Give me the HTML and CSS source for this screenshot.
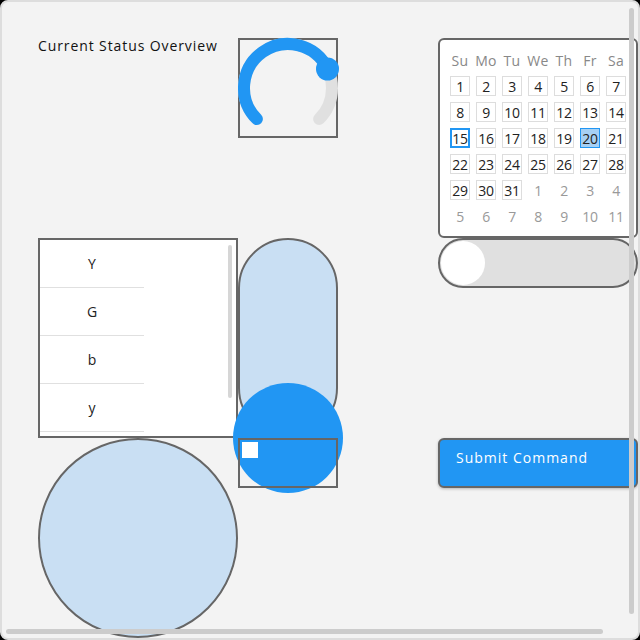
FILE: index.html
```html
<!DOCTYPE html>
<html>
<head>
<meta charset="utf-8">
<link rel="stylesheet" href="styles.css">
</head>
<body>
<div class="frame">
  <div class="grid">
    <div class="title">Current Status Overview</div>

    <div class="knob">
      <svg width="96" height="96" viewBox="0 0 96 96">
        <path d="M 16.89 79.11 A 44 44 0 1 1 79.11 79.11" fill="none" stroke="#e0e0e0" stroke-width="12" stroke-linecap="round"/>
        <path d="M 16.89 79.11 A 44 44 0 1 1 87.55 28.71" fill="none" stroke="#2196f3" stroke-width="12" stroke-linecap="round"/>
        <circle cx="87.5" cy="29" r="11.5" fill="#2196f3"/>
      </svg>
    </div>

    <div class="calendar">
      <div class="cal-grid">
        <span class="dow">Su</span><span class="dow">Mo</span><span class="dow">Tu</span><span class="dow">We</span><span class="dow">Th</span><span class="dow">Fr</span><span class="dow">Sa</span>
        <span class="day">1</span><span class="day">2</span><span class="day">3</span><span class="day">4</span><span class="day">5</span><span class="day">6</span><span class="day">7</span>
        <span class="day">8</span><span class="day">9</span><span class="day">10</span><span class="day">11</span><span class="day">12</span><span class="day">13</span><span class="day">14</span>
        <span class="day today">15</span><span class="day">16</span><span class="day">17</span><span class="day">18</span><span class="day">19</span><span class="day selected">20</span><span class="day">21</span>
        <span class="day">22</span><span class="day">23</span><span class="day">24</span><span class="day">25</span><span class="day">26</span><span class="day">27</span><span class="day">28</span>
        <span class="day">29</span><span class="day">30</span><span class="day">31</span><span class="day other">1</span><span class="day other">2</span><span class="day other">3</span><span class="day other">4</span>
        <span class="day other">5</span><span class="day other">6</span><span class="day other">7</span><span class="day other">8</span><span class="day other">9</span><span class="day other">10</span><span class="day other">11</span>
      </div>
    </div>

    <div class="toggle"><span class="toggle-knob"></span></div>

    <div class="list">
      <div class="list-items">
        <div class="list-item">Y</div>
        <div class="list-item">G</div>
        <div class="list-item">b</div>
        <div class="list-item">y</div>
        <div class="list-item"></div>
      </div>
      <div class="list-scroll"></div>
    </div>

    <div class="slider"><span class="slider-thumb"></span></div>

    <div class="checkbox"><span class="check"></span></div>

    <button class="submit">Submit Command</button>

    <div class="big-circle"></div>
  </div>
  <div class="vscroll"></div>
  <div class="hscroll"></div>
</div>
</body>
</html>
```
FILE: styles.css
```css
html, body {
  margin: 0;
  padding: 0;
  background: #000;
}
body {
  width: 640px;
  height: 640px;
  font-family: "Open Sans", "Noto Sans", sans-serif;
}
.frame {
  position: relative;
  box-sizing: border-box;
  width: 640px;
  height: 640px;
  border: 2px solid #dddddd;
  border-radius: 8px;
  background: #f3f3f3;
  overflow: hidden;
}
.grid {
  display: grid;
  grid-template-columns: repeat(6, 100px);
  grid-template-rows: repeat(12, 50px);
  padding: 36px 0 0 36px;
}
.title {
  grid-column: 1 / 3;
  grid-row: 1;
  font-size: 14px;
  color: #111;
  line-height: 16px;
  letter-spacing: 0.9px;
  white-space: nowrap;
}
.knob {
  grid-column: 3;
  grid-row: 1 / 3;
  box-sizing: border-box;
  border: 2px solid #666;
  display: flex;
  align-items: flex-start;
  justify-content: center;
}
.knob svg { display: block; overflow: visible; }

.calendar {
  grid-column: 5 / 7;
  grid-row: 1 / 5;
  box-sizing: border-box;
  border: 2px solid #666;
  border-radius: 6px;
  background: #fff;
  padding: 7px 0 0 7px;
}
.cal-grid {
  display: grid;
  grid-template-columns: repeat(7, 26px);
  grid-auto-rows: 26px;
  font-size: 14px;
}
.dow {
  display: flex;
  align-items: center;
  justify-content: center;
  color: #888;
  letter-spacing: 0.3px;
}
.day {
  justify-self: center;
  align-self: center;
  box-sizing: border-box;
  width: 20px;
  height: 20px;
  border: 1px solid #dddddd;
  display: flex;
  align-items: center;
  justify-content: center;
  color: #222;
  letter-spacing: -0.3px;
}
.day.today { border: 2px solid #2196f3; }
.day.selected { background: #a6d0f4; border-color: #2196f3; }
.day.other { border-color: transparent; color: #999; }

.toggle {
  grid-column: 5 / 7;
  grid-row: 5;
  box-sizing: border-box;
  border: 2px solid #666;
  border-radius: 25px;
  background: #e0e0e0;
  display: flex;
  align-items: center;
  padding-left: 1px;
}
.toggle-knob {
  width: 44px;
  height: 44px;
  border-radius: 50%;
  background: #fff;
}

.list {
  grid-column: 1 / 3;
  grid-row: 5 / 9;
  box-sizing: border-box;
  border: 2px solid #666;
  background: #fff;
  overflow: hidden;
  position: relative;
}
.list-items { width: 104px; }
.list-item {
  height: 47px;
  border-bottom: 1px solid #e0e0e0;
  display: flex;
  align-items: center;
  justify-content: center;
  font-size: 14px;
  color: #222;
}
.list-scroll {
  position: absolute;
  right: 4px;
  top: 5px;
  width: 4px;
  height: 153px;
  border-radius: 2px;
  background: #d6d6d6;
}

.slider {
  grid-column: 3;
  grid-row: 5 / 9;
  box-sizing: border-box;
  border: 2px solid #666;
  border-radius: 50px;
  background: #c9dff3;
  position: relative;
}
.slider-thumb {
  position: absolute;
  left: 50%;
  bottom: -57px;
  width: 110px;
  height: 110px;
  margin-left: -55px;
  border-radius: 50%;
  background: #2196f3;
}

.checkbox {
  grid-column: 3;
  grid-row: 9;
  box-sizing: border-box;
  border: 2px solid #666;
  position: relative;
  z-index: 2;
  padding: 2px;
}
.check {
  display: block;
  width: 16px;
  height: 16px;
  background: #fff;
}

.submit {
  grid-column: 5 / 7;
  grid-row: 9;
  box-sizing: border-box;
  border: 2px solid #666;
  border-radius: 6px;
  background: #2196f3;
  color: #fff;
  font-family: inherit;
  font-size: 14px;
  text-align: left;
  padding: 8px 16px 0 16px;
  display: flex;
  align-items: flex-start;
  box-shadow: 0 1px 3px rgba(0,0,0,0.25);
  letter-spacing: 1px;
}

.big-circle {
  grid-column: 1 / 3;
  grid-row: 9 / 13;
  box-sizing: border-box;
  border: 2px solid #666;
  border-radius: 50%;
  background: #c9dff3;
}

.vscroll {
  position: absolute;
  right: 4px;
  top: 6px;
  width: 5px;
  height: 606px;
  border-radius: 3px;
  background: #cccccc;
}
.hscroll {
  position: absolute;
  left: 4px;
  bottom: 4px;
  width: 597px;
  height: 5px;
  border-radius: 3px;
  background: #cccccc;
}
```
